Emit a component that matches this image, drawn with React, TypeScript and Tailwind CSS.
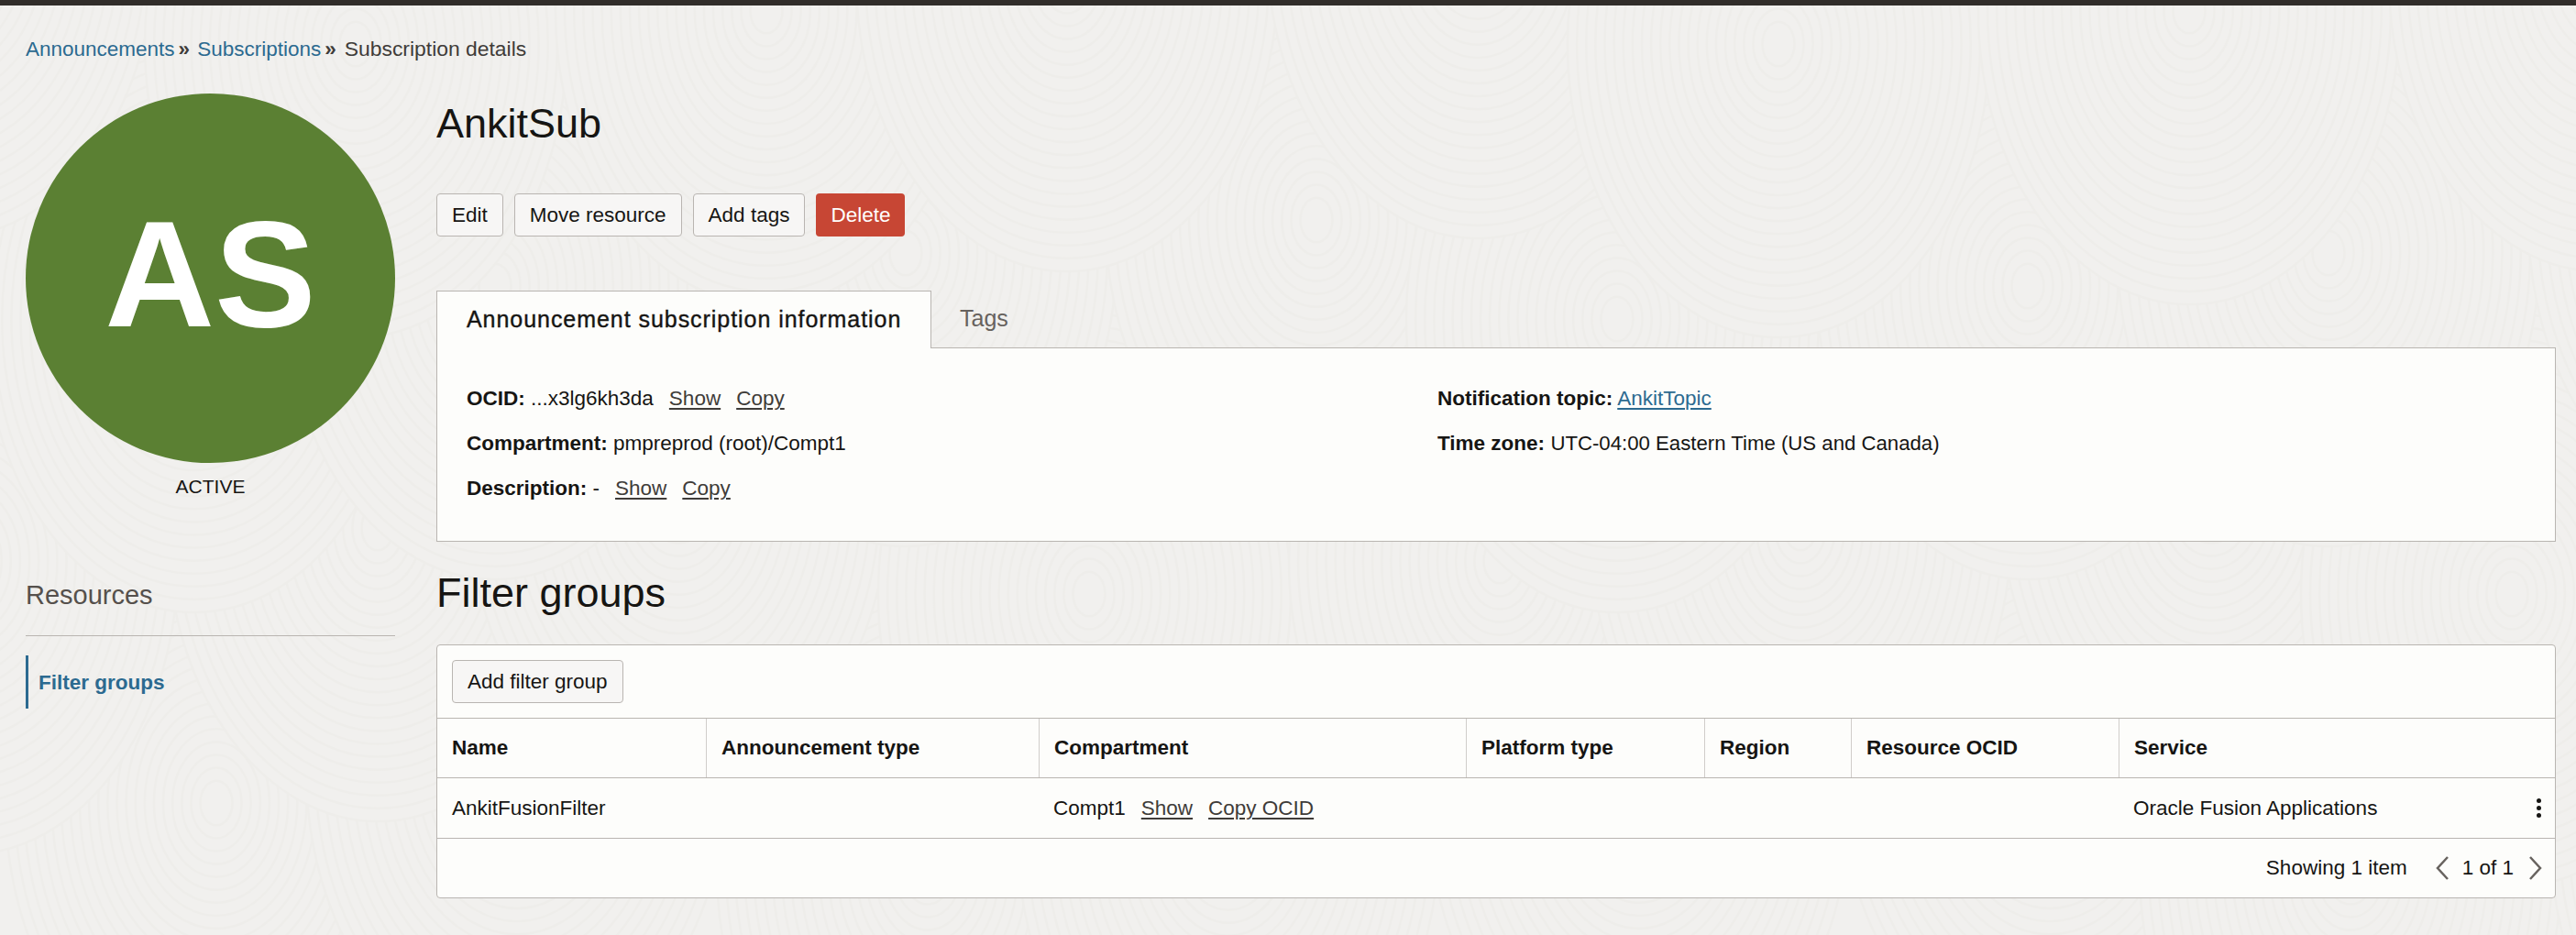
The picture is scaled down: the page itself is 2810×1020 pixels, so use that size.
const SANS = "font-['Liberation_Sans',Arial,sans-serif]";

const COLUMNS = ["Name", "Announcement type", "Compartment", "Platform type", "Region", "Resource OCID", "Service"];

// staggered grid of fingerprint loops, bottom rows are painted first
const LOOPS: { cx: number; cy: number }[] = [];
for (let row = 3; row >= 0; row--) {
  for (let col = 0; col < 8; col++) {
    LOOPS.push({
      cx: col * 400 + (row % 2 ? 200 : 0) + ((col * 7 + row * 13) % 5) * 24 - 60,
      cy: row * 300 + ((col * 11 + row * 3) % 4) * 36 - 60,
    });
  }
}
const RINGS = Array.from({ length: 22 }, (_, i) => 1 - i * 0.044);

function Background() {
  return (
    <svg className="absolute inset-0" width="2810" height="1020" fill="#f1f0ee" stroke="#eeedea" strokeWidth="2.5">
      {LOOPS.map((l) => (
        <g key={`${l.cx}-${l.cy}`}>
          {RINGS.map((k) => (
            <ellipse key={k} cx={l.cx} cy={l.cy} rx={230 * k} ry={320 * k} />
          ))}
        </g>
      ))}
    </svg>
  );
}

function Btn({ label }: { label: string }) {
  return (
    <button className="h-[47px] px-[16px] rounded-[4px] border border-[#b9b5b1] bg-[#f7f6f5] text-[22.5px] text-[#161513]">
      {label}
    </button>
  );
}

function Action({ label }: { label: string }) {
  return <a className="ml-[17px] underline decoration-2 underline-offset-[3px] text-[#3f3c39]">{label}</a>;
}

function Chevron({ d }: { d: string }) {
  return (
    <svg width="17" height="26" viewBox="0 0 17 26" fill="none" stroke="#67625e" strokeWidth="2.5">
      <path d={d} />
    </svg>
  );
}

export default function App() {
  return (
    <div className={`relative w-[2810px] h-[1020px] overflow-hidden bg-[#f1f0ee] text-[#161513] ${SANS}`}>
      <Background />
      <div className="relative">
        <div className="h-[6px] bg-[#312d2a]" />

        <div className="h-[96px] pl-[28px] pt-[34px] text-[22.5px] leading-[26px] text-[#3f3c39]">
          <a className="text-[#2c6a90]">Announcements</a>
          <span className="ml-[4px] mr-[8px] font-bold">»</span>
          <a className="text-[#2c6a90]">Subscriptions</a>
          <span className="ml-[4px] mr-[9px] font-bold">»</span>
          <span className="text-[22.9px]">Subscription details</span>
        </div>

        <div className="flex pl-[28px] pr-[22px]">
          {/* left column */}
          <div className="w-[403px] shrink-0">
            <div className="w-[403px] h-[403px] rounded-full bg-[#5b8033] flex items-center justify-center text-white font-bold text-[166px] leading-none pb-[10px]">
              AS
            </div>
            <p className="mt-[13px] text-center text-[21px] leading-[26px]">ACTIVE</p>
            <p className="mt-[87px] text-[29px] leading-[36px] text-[#55504c]">Resources</p>
            <div className="mt-[26px] border-t border-[#b9b5b1]" />
            <div className="mt-[21px] h-[58px] border-l-[3px] border-[#2c6a90] pl-[11px] pt-[2px] flex items-center text-[22.5px] font-bold text-[#2c6a90]">
              Filter groups
            </div>
          </div>

          {/* main column */}
          <div className="ml-[45px] flex-1">
            <h1 className="text-[45px] leading-[52px] mt-[7px]">AnkitSub</h1>

            <div className="mt-[50px] flex gap-[12px]">
              <Btn label="Edit" />
              <Btn label="Move resource" />
              <Btn label="Add tags" />
              <button className="h-[47px] px-[16px] rounded-[4px] bg-[#c74634] text-[22.5px] text-white">Delete</button>
            </div>

            <div className="mt-[58px] flex items-end h-[63px]">
              <div className="w-[540px] h-[63px] -mb-px relative z-10 bg-[#fdfdfb] border border-b-0 border-[#b9b5b1] pl-[32px] flex items-center text-[25px] tracking-[0.95px] [-webkit-text-stroke:0.4px_#161513] whitespace-nowrap">
                Announcement subscription information
              </div>
              <div className="pl-[31px] h-[62px] flex items-center text-[25px] text-[#67625e]">Tags</div>
            </div>

            <div className="h-[212px] bg-[#fdfdfb] border border-[#b9b5b1] pl-[32px] pt-[30px] grid grid-cols-[1059px_1fr] text-[22.5px] leading-[49px]">
              <div>
                <div>
                  <b>OCID:</b> ...x3lg6kh3da<Action label="Show" /><Action label="Copy" />
                </div>
                <div>
                  <b>Compartment:</b> pmpreprod (root)/Compt1
                </div>
                <div>
                  <b>Description:</b> -<Action label="Show" /><Action label="Copy" />
                </div>
              </div>
              <div>
                <div>
                  <b>Notification topic:</b> <a className="text-[#2c6a90] underline decoration-2 underline-offset-[3px]">AnkitTopic</a>
                </div>
                <div>
                  <b>Time zone:</b> <span className="text-[22.2px]">UTC-04:00 Eastern Time (US and Canada)</span>
                </div>
              </div>
            </div>

            <h2 className="mt-[30px] text-[45px] leading-[52px]">Filter groups</h2>

            <div className="mt-[30px] bg-[#fdfdfb] border border-[#b9b5b1] rounded-[4px] text-[22.5px]">
              <div className="h-[80px] pl-[16px] flex items-center border-b border-[#b9b5b1]">
                <Btn label="Add filter group" />
              </div>
              <div className="grid grid-cols-[293px_363px_466px_260px_160px_292px_1fr] h-[65px] border-b border-[#b9b5b1] font-bold">
                {COLUMNS.map((c, i) => (
                  <div key={c} className={`flex items-center pl-[16px] ${i > 0 ? "border-l border-[#d0cdca]" : ""}`}>
                    {c}
                  </div>
                ))}
              </div>
              <div className="grid grid-cols-[293px_363px_466px_260px_160px_292px_1fr] h-[66px] border-b border-[#b9b5b1]">
                <div className="flex items-center pl-[16px]">AnkitFusionFilter</div>
                <div />
                <div className="flex items-center pl-[16px]">
                  Compt1<Action label="Show" /><Action label="Copy OCID" />
                </div>
                <div />
                <div />
                <div />
                <div className="flex items-center justify-between pl-[16px] pr-[15px]">
                  Oracle Fusion Applications
                  <span className="flex flex-col gap-[3px]">
                    <i className="block w-[5px] h-[5px] rounded-full bg-[#161513]" />
                    <i className="block w-[5px] h-[5px] rounded-full bg-[#161513]" />
                    <i className="block w-[5px] h-[5px] rounded-full bg-[#161513]" />
                  </span>
                </div>
              </div>
              <div className="h-[64px] flex items-center justify-end pr-[13px]">
                <span>Showing 1 item</span>
                <span className="ml-[30px]"><Chevron d="M14 1 3 13l11 12" /></span>
                <span className="ml-[13px] mr-[15px]">1 of 1</span>
                <Chevron d="M3 1l11 12L3 25" />
              </div>
            </div>
          </div>
        </div>
      </div>
    </div>
  );
}
